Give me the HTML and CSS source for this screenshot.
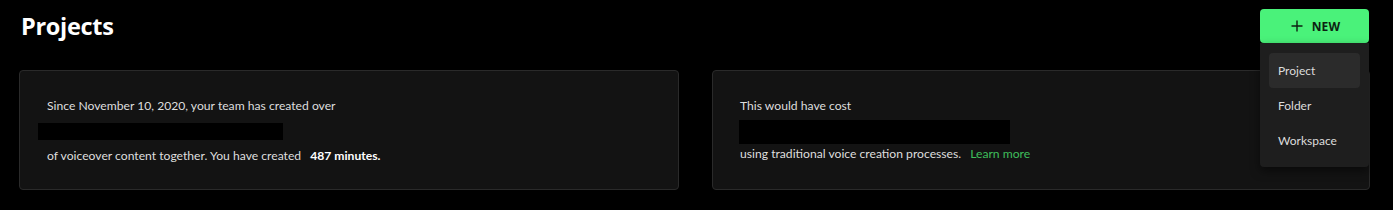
FILE: index.html
```html
<!DOCTYPE html>
<html lang="en">
<head>
<meta charset="utf-8">
<title>Projects</title>
<link rel="stylesheet" href="styles.css">
</head>
<body>
<div class="page">
  <header class="header">
    <h1 class="title">Projects</h1>
    <div class="new-wrap">
      <button class="new-btn" type="button">
        <svg class="plus" width="12" height="12" viewBox="0 0 12 12" aria-hidden="true"><path d="M6 0.5v11M0.5 6h11" stroke="#0d1f12" stroke-width="1.4" fill="none"/></svg>
        <span>NEW</span>
      </button>
      <ul class="menu">
        <li class="menu-item active">Project</li>
        <li class="menu-item">Folder</li>
        <li class="menu-item">Workspace</li>
      </ul>
    </div>
  </header>
  <section class="stats">
    <div class="card">
      <p class="line">Since November 10, 2020, your team has created over</p>
      <div class="redact redact-a"></div>
      <p class="line">of voiceover content together. You have created <strong class="strong">487 minutes.</strong></p>
    </div>
    <div class="card">
      <p class="line">This would have cost</p>
      <div class="redact redact-b"></div>
      <p class="line">using traditional voice creation processes. <a class="link" href="#">Learn more</a></p>
    </div>
  </section>
</div>
</body>
</html>
```
FILE: styles.css
```css
* { box-sizing: border-box; }
html, body { margin: 0; padding: 0; background: #000; }
body {
  font-family: "Lato", "Open Sans", sans-serif;
  color: #e6e6e6;
}
.page {
  padding: 9px 23px 0 19px;
}
.header {
  display: flex;
  justify-content: space-between;
  align-items: flex-start;
  height: 61px;
}
.title {
  margin: 0;
  padding: 2px 0 0 2px;
  font-family: "Open Sans", sans-serif;
  font-size: 23.5px;
  font-weight: 700;
  color: #fff;
  line-height: 30px;
  letter-spacing: -0.3px;
}
.new-wrap {
  position: relative;
  width: 109px;
  margin-right: 1px;
}
.new-btn {
  width: 109px;
  height: 34px;
  background: #4af27a;
  border: none;
  border-radius: 4px;
  display: flex;
  align-items: center;
  justify-content: center;
  gap: 9px;
  padding: 0 0 0 2px;
  font-family: "Open Sans", sans-serif;
  font-weight: 700;
  font-size: 12px;
  color: #0d1f12;
  letter-spacing: 0.2px;
}
.plus { display: block; }
.menu {
  position: absolute;
  top: 34px;
  left: 0;
  width: 109px;
  margin: 0;
  padding: 10px 9px 9px;
  list-style: none;
  background: #1e1e1e;
  border-radius: 0 0 4px 4px;
  box-shadow: 0 4px 10px rgba(0,0,0,0.5);
  z-index: 2;
}
.menu-item {
  height: 35px;
  padding: 0 9px;
  display: flex;
  align-items: center;
  font-size: 12px;
  color: #dcdcdc;
  border-radius: 4px;
}
.menu-item.active { background: #2b2b2b; }
.stats {
  display: grid;
  grid-template-columns: 660px 658px;
  gap: 33px;
}
.card {
  height: 120px;
  background: #131313;
  border: 1px solid #2a2a2a;
  border-radius: 4px;
  padding: 26px 27px 0;
}
.line {
  margin: 0;
  font-size: 12.15px;
  line-height: 18px;
  color: #dedede;
}
.redact {
  background: #000;
  margin: 0;
}
.redact-a {
  width: 245px;
  height: 17px;
  margin: 8px 0 7px -9px;
}
.redact-b {
  width: 271px;
  height: 24px;
  margin: 5px 0 1px -1px;
}
.strong { font-weight: 700; color: #fff; margin-left: 6px; }
.link { color: #3fbf5c; text-decoration: none; margin-left: 6px; }
```
